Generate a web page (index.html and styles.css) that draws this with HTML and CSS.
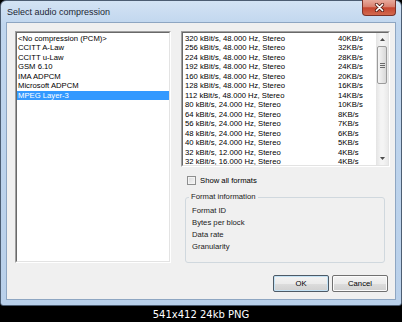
FILE: index.html
```html
<!DOCTYPE html>
<html>
<head>
<meta charset="utf-8">
<title>Select audio compression</title>
<link rel="stylesheet" href="styles.css">
</head>
<body>
<div class="page">
  <div class="window">
    <div class="titlebar">
      <span class="title">Select audio compression</span>
      <div class="close">
        <svg width="11" height="9" viewBox="0 0 11 9">
          <path d="M2.5 1.5 L8.5 7.5 M8.5 1.5 L2.5 7.5" stroke="#5a2218" stroke-width="3.2" stroke-linecap="round" fill="none"/>
          <path d="M2.5 1.5 L8.5 7.5 M8.5 1.5 L2.5 7.5" stroke="#ffffff" stroke-width="1.7" stroke-linecap="round" fill="none"/>
        </svg>
      </div>
    </div>
    <div class="client">
      <div class="main">
        <div class="list left">
          <div class="list-in">
            <div class="item">&lt;No compression (PCM)&gt;</div>
            <div class="item">CCITT A-Law</div>
            <div class="item">CCITT u-Law</div>
            <div class="item">GSM 6.10</div>
            <div class="item">IMA ADPCM</div>
            <div class="item">Microsoft ADPCM</div>
            <div class="item sel">MPEG Layer-3</div>
          </div>
        </div>
        <div class="right">
          <div class="list formats">
            <div class="list-in row">
              <div class="rows">
                <div class="frow"><span>320 kBit/s, 48.000 Hz, Stereo</span><span>40KB/s</span></div>
                <div class="frow"><span>256 kBit/s, 48.000 Hz, Stereo</span><span>32KB/s</span></div>
                <div class="frow"><span>224 kBit/s, 48.000 Hz, Stereo</span><span>28KB/s</span></div>
                <div class="frow"><span>192 kBit/s, 48.000 Hz, Stereo</span><span>24KB/s</span></div>
                <div class="frow"><span>160 kBit/s, 48.000 Hz, Stereo</span><span>20KB/s</span></div>
                <div class="frow"><span>128 kBit/s, 48.000 Hz, Stereo</span><span>16KB/s</span></div>
                <div class="frow"><span>112 kBit/s, 48.000 Hz, Stereo</span><span>14KB/s</span></div>
                <div class="frow"><span>80 kBit/s, 24.000 Hz, Stereo</span><span>10KB/s</span></div>
                <div class="frow"><span>64 kBit/s, 24.000 Hz, Stereo</span><span>8KB/s</span></div>
                <div class="frow"><span>56 kBit/s, 24.000 Hz, Stereo</span><span>7KB/s</span></div>
                <div class="frow"><span>48 kBit/s, 24.000 Hz, Stereo</span><span>6KB/s</span></div>
                <div class="frow"><span>40 kBit/s, 24.000 Hz, Stereo</span><span>5KB/s</span></div>
                <div class="frow"><span>32 kBit/s, 12.000 Hz, Stereo</span><span>4KB/s</span></div>
                <div class="frow"><span>32 kBit/s, 16.000 Hz, Stereo</span><span>4KB/s</span></div>
              </div>
              <div class="scroll">
                <div class="sbtn">
                  <svg width="5" height="3" viewBox="0 0 5 3"><path d="M0 3 L2.5 0 L5 3 Z" fill="#4d4d4d"/></svg>
                </div>
                <div class="thumb"><span class="grip"></span></div>
                <div class="track"></div>
                <div class="sbtn">
                  <svg width="5" height="3" viewBox="0 0 5 3"><path d="M0 0 L2.5 3 L5 0 Z" fill="#4d4d4d"/></svg>
                </div>
              </div>
            </div>
          </div>
          <div class="check"><span class="box"></span><span>Show all formats</span></div>
          <fieldset class="group">
            <legend>Format information</legend>
            <div class="info">Format ID</div>
            <div class="info">Bytes per block</div>
            <div class="info">Data rate</div>
            <div class="info">Granularity</div>
          </fieldset>
        </div>
      </div>
      <div class="buttons">
        <div class="btn default">OK</div>
        <div class="btn">Cancel</div>
      </div>
    </div>
  </div>
  <div class="caption">541x412 24kb PNG</div>
</div>
</body>
</html>
```
FILE: styles.css
```css
* { box-sizing: border-box; }
html, body { margin: 0; padding: 0; background: #000; }
body {
  width: 402px;
  height: 322px;
  overflow: hidden;
  font-family: "Liberation Sans", Arial, sans-serif;
  color: #000;
}
.page {
  display: flex;
  flex-direction: column;
  width: 402px;
  height: 322px;
}
.window {
  width: 402px;
  height: 306px;
  border: 1px solid #4c5d72;
  border-radius: 6px 6px 3px 3px;
  background: linear-gradient(180deg, #d3e3f4 0, #c0d6ee 24px, #b9d0ea 100%);
  padding: 0 6px 6px;
  display: flex;
  flex-direction: column;
}
.titlebar {
  height: 22px;
  display: flex;
  justify-content: space-between;
  align-items: flex-start;
}
.title {
  font-size: 9px;
  line-height: 22px;
  color: #1b2633;
}
.close {
  width: 34px;
  height: 16px;
  margin-top: -1px;
  margin-right: -1px;
  border: 1px solid #7b3228;
  border-top: none;
  border-radius: 0 0 4px 4px;
  background: linear-gradient(180deg, #e8ab9d 0, #d98170 45%, #c5452f 52%, #d36a4f 100%);
  display: flex;
  align-items: center;
  justify-content: center;
}
.client {
  flex: 1;
  background: #f0f0f0;
  padding: 8px 5px 7px 8px;
  box-shadow: 0 0 0 1px #8ea6c2;
  display: flex;
  flex-direction: column;
}
.main {
  display: flex;
  gap: 10px;
  height: 232px;
}
.list {
  border: 1px solid;
  border-color: #a0a0a0 #ffffff #ffffff #a0a0a0;
  background: #fff;
}
.list-in {
  height: 100%;
  border: 1px solid;
  border-color: #696969 #e3e3e3 #e3e3e3 #696969;
  overflow: hidden;
  padding-top: 0.5px;
}
.left {
  width: 156px;
  height: 232px;
}
.item {
  font-size: 7.7px;
  line-height: 9.5px;
  height: 9.5px;
  padding-left: 1px;
  white-space: nowrap;
}
.item.sel {
  background: #3399ff;
  color: #fff;
}
.right {
  width: 209px;
  display: flex;
  flex-direction: column;
}
.formats {
  height: 136px;
}
.list-in.row {
  display: flex;
  padding-top: 0;
}
.rows {
  flex: 1;
  padding-left: 2px;
  padding-top: 0.5px;
  overflow: hidden;
}
.frow {
  display: grid;
  grid-template-columns: 153px auto;
  font-size: 7.7px;
  line-height: 9.5px;
  height: 9.5px;
  white-space: nowrap;
}
.scroll {
  width: 12px;
  display: flex;
  flex-direction: column;
  background: linear-gradient(90deg, #e4e4e4, #f4f4f4 40%, #f4f4f4 60%, #e9e9e9);
}
.sbtn {
  height: 13px;
  display: flex;
  align-items: center;
  justify-content: center;
}
.thumb {
  height: 38px;
  margin: 0 1px;
  border: 1px solid #9b9b9b;
  border-radius: 2px;
  background: linear-gradient(90deg, #f5f5f5, #e7e7e7 50%, #d8d8d8);
  display: flex;
  align-items: center;
  justify-content: center;
}
.grip {
  width: 5px;
  height: 5px;
  background: repeating-linear-gradient(180deg, #6a6a6a 0 1px, transparent 1px 2px);
}
.track {
  flex: 1;
}
.check {
  display: flex;
  align-items: center;
  gap: 4px;
  margin: 8px 0 0 6px;
  height: 10px;
  font-size: 7.7px;
  white-space: nowrap;
}
.box {
  width: 9px;
  height: 9px;
  border: 1px solid #8e8f8f;
  background: linear-gradient(135deg, #d9dadb, #f7f7f7);
  box-shadow: inset 0 0 0 1px #f4f4f4;
}
.group {
  margin: 7px 5px 0 4px;
  padding: 3px 6px 9px 6px;
  border: 1px solid #d0d8de;
  border-radius: 3px;
  min-width: 0;
}
.group legend {
  font-size: 7.7px;
  line-height: 10px;
  padding: 0 2px;
  margin-left: -3px;
  color: #1a1a1a;
}
.info {
  font-size: 7.7px;
  line-height: 12px;
  height: 12px;
  color: #1a1a1a;
  white-space: nowrap;
}
.buttons {
  display: flex;
  justify-content: flex-end;
  gap: 3px;
  margin-top: 12px;
  padding-right: 2px;
}
.btn {
  width: 56px;
  height: 17px;
  border: 1px solid #707070;
  border-radius: 2px;
  background: linear-gradient(180deg, #f3f3f3 0, #ebebeb 50%, #dddddd 50%, #d0d0d0 100%);
  box-shadow: inset 0 0 0 1px #fbfbfb;
  font-size: 7.7px;
  display: flex;
  align-items: center;
  justify-content: center;
}
.btn.default {
  border-color: #4d5a66;
  box-shadow: inset 0 0 0 1px #c4e2f5;
}
.caption {
  height: 16px;
  display: flex;
  align-items: center;
  justify-content: center;
  color: #fff;
  font-family: "DejaVu Sans", Verdana, sans-serif;
  font-size: 10px;
}
```
